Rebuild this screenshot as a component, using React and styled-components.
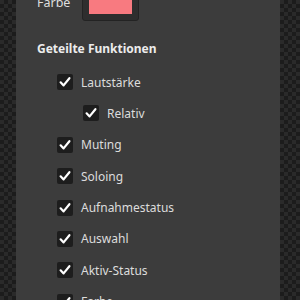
import React from "react";
import styled, { createGlobalStyle } from "styled-components";

const GlobalStyle = createGlobalStyle`
  html, body {
    margin: 0;
    padding: 0;
    width: 300px;
    height: 300px;
    overflow: hidden;
  }
  body {
    font-family: "Noto Sans", "Open Sans", sans-serif;
    background-color: #2a2a2a;
    background-image:
      linear-gradient(45deg, #1c1c1c 25%, transparent 25%, transparent 75%, #1c1c1c 75%),
      linear-gradient(45deg, #1c1c1c 25%, transparent 25%, transparent 75%, #1c1c1c 75%);
    background-size: 8px 8px;
    background-position: 0 0, 4px 4px;
  }
`;

const Page = styled.div`
  display: flex;
  height: 300px;
  padding-left: 16px;
`;

const Panel = styled.div`
  width: 264px;
  height: 300px;
  background: #3c3c3c;
  overflow: hidden;
  display: flex;
  flex-direction: column;
  padding-left: 21px;
  box-sizing: border-box;
`;

const ColorRow = styled.div`
  display: flex;
  align-items: flex-end;
  gap: 12px;
  margin-top: -14px;
`;

const Label = styled.span`
  color: #dedede;
  font-size: 12.5px;
  line-height: 16px;
  margin-bottom: 10px;
`;

const SwatchFrame = styled.div`
  width: 57px;
  height: 35px;
  box-sizing: border-box;
  background: #2e2e2e;
  border: 1px solid #232323;
  border-radius: 3px;
  padding: 5px 6px 6px;
  display: flex;
`;

const Swatch = styled.div`
  flex: 1;
  background: ${({ color }) => color};
`;

const Heading = styled.div`
  color: #ececec;
  font-weight: bold;
  font-size: 12px;
  line-height: 16px;
  margin-top: 20px;
  margin-bottom: 17px;
`;

const List = styled.div`
  display: flex;
  flex-direction: column;
  gap: 15.4px;
`;

const Row = styled.label`
  display: flex;
  align-items: center;
  gap: 8px;
  height: 16px;
  padding-left: ${({ level }) => 20 + level * 26}px;
  color: #dcdcdc;
  font-size: 12px;
`;

const Box = styled.span`
  width: 16px;
  height: 16px;
  border-radius: 2px;
  background: #1d1d1d;
  display: flex;
  align-items: center;
  justify-content: center;
  flex-shrink: 0;
`;

const Check = () => (
  <svg width="12" height="12" viewBox="0 0 12 12">
    <path d="M1.6 6.3 L4.6 9.4 L10.4 2.2" fill="none" stroke="#ffffff" strokeWidth="2.2" strokeLinecap="round" strokeLinejoin="round" />
  </svg>
);

const items = [
  { text: "Lautstärke", level: 0 },
  { text: "Relativ", level: 1 },
  { text: "Muting", level: 0 },
  { text: "Soloing", level: 0 },
  { text: "Aufnahmestatus", level: 0 },
  { text: "Auswahl", level: 0 },
  { text: "Aktiv-Status", level: 0 },
  { text: "Farbe", level: 0 },
];

export default function App() {
  return (
    <>
      <GlobalStyle />
      <Page>
        <Panel>
          <ColorRow>
            <Label>Farbe</Label>
            <SwatchFrame>
              <Swatch color="#f87a80" />
            </SwatchFrame>
          </ColorRow>
          <Heading>Geteilte Funktionen</Heading>
          <List>
            {items.map((it) => (
              <Row key={it.text} level={it.level}>
                <Box>
                  <Check />
                </Box>
                {it.text}
              </Row>
            ))}
          </List>
        </Panel>
      </Page>
    </>
  );
}
